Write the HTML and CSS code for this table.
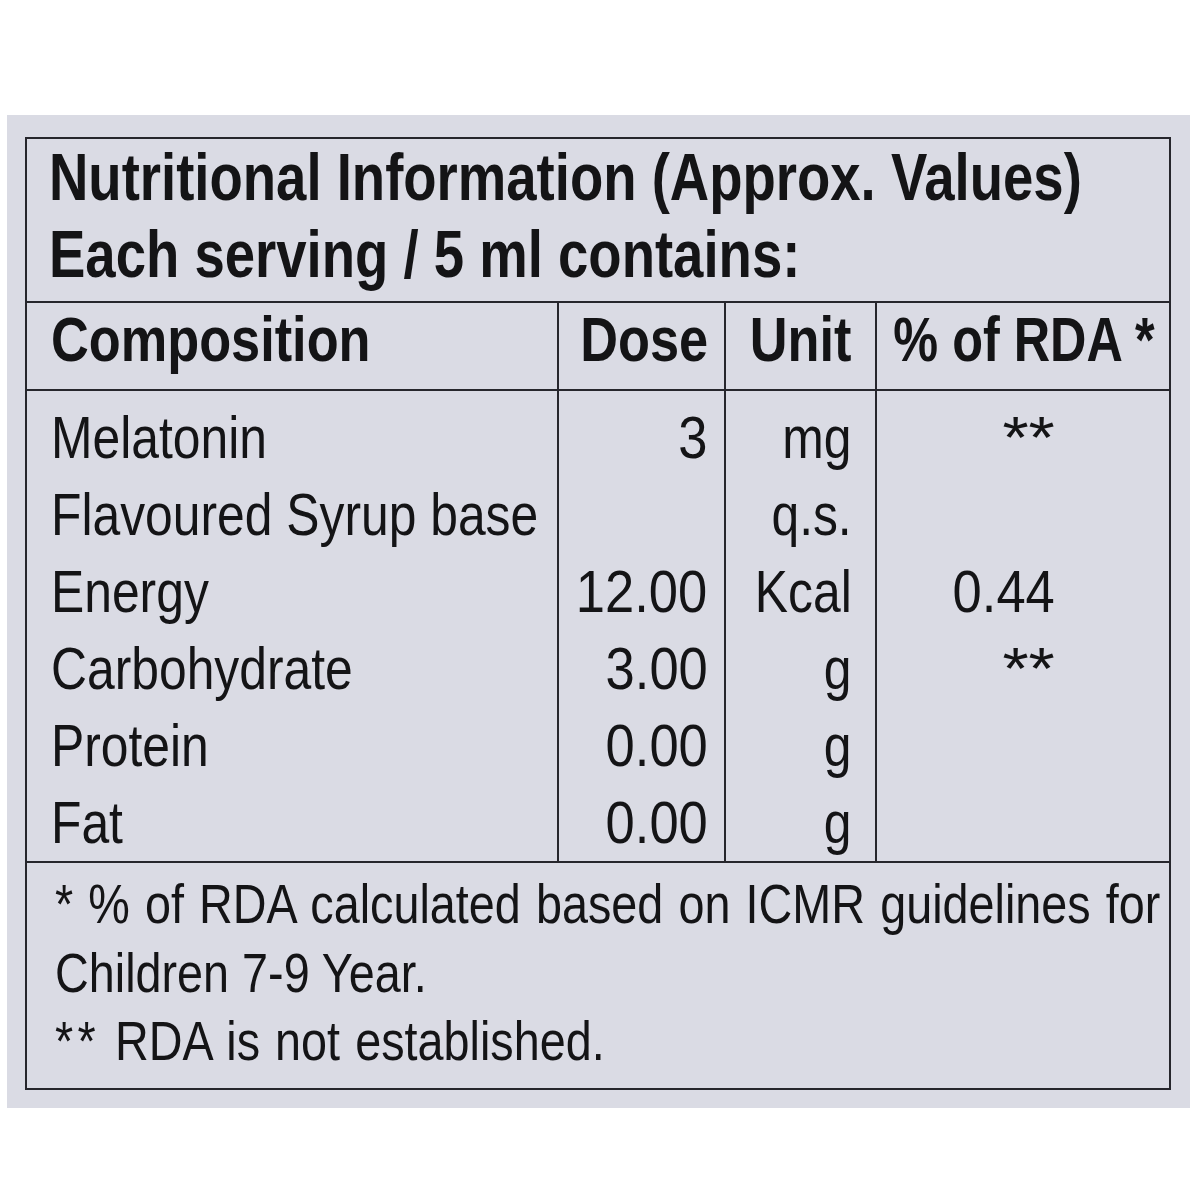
FILE: index.html
```html
<!DOCTYPE html>
<html>
<head>
<meta charset="utf-8">
<link rel="stylesheet" href="styles.css">
</head>
<body>
<div class="panel">
  <div class="label">
    <div class="title">
      <div class="tline"><span class="sq sq-l">Nutritional Information (Approx. Values)</span></div>
      <div class="tline"><span class="sq sq-l">Each serving / 5 ml contains:</span></div>
    </div>
    <table class="facts">
      <colgroup>
        <col class="c1"><col class="c2"><col class="c3"><col class="c4">
      </colgroup>
      <thead>
        <tr>
          <th class="comp"><span class="sq sq-l">Composition</span></th>
          <th class="dose"><span class="sq sq-r">Dose</span></th>
          <th class="unit"><span class="sq sq-r">Unit</span></th>
          <th class="h-rda"><span class="sq sq-r">% of RDA *</span></th>
        </tr>
      </thead>
      <tbody>
        <tr class="first">
          <td class="comp"><span class="sq sq-l">Melatonin</span></td>
          <td class="dose"><span class="sq sq-r num">3</span></td>
          <td class="unit"><span class="sq sq-r">mg</span></td>
          <td class="rda"><span class="sq sq-r stars">**</span></td>
        </tr>
        <tr>
          <td class="comp"><span class="sq sq-l">Flavoured Syrup base</span></td>
          <td class="dose"></td>
          <td class="unit"><span class="sq sq-r">q.s.</span></td>
          <td class="rda"></td>
        </tr>
        <tr>
          <td class="comp"><span class="sq sq-l">Energy</span></td>
          <td class="dose"><span class="sq sq-r num">12.00</span></td>
          <td class="unit"><span class="sq sq-r">Kcal</span></td>
          <td class="rda"><span class="sq sq-r num">0.44</span></td>
        </tr>
        <tr>
          <td class="comp"><span class="sq sq-l">Carbohydrate</span></td>
          <td class="dose"><span class="sq sq-r num">3.00</span></td>
          <td class="unit"><span class="sq sq-r">g</span></td>
          <td class="rda"><span class="sq sq-r stars">**</span></td>
        </tr>
        <tr>
          <td class="comp"><span class="sq sq-l">Protein</span></td>
          <td class="dose"><span class="sq sq-r num">0.00</span></td>
          <td class="unit"><span class="sq sq-r">g</span></td>
          <td class="rda"></td>
        </tr>
        <tr>
          <td class="comp"><span class="sq sq-l">Fat</span></td>
          <td class="dose"><span class="sq sq-r num">0.00</span></td>
          <td class="unit"><span class="sq sq-r">g</span></td>
          <td class="rda"></td>
        </tr>
      </tbody>
    </table>
    <div class="notes">
      <div class="nline"><span class="sq sq-l spaced">* % of RDA calculated based on ICMR guidelines for</span></div>
      <div class="nline"><span class="sq sq-l">Children 7-9 Year.</span></div>
      <div class="nline"><span class="sq sq-l spaced"><span class="nstar">**</span> RDA is not established.</span></div>
    </div>
  </div>
</div>
</body>
</html>
```
FILE: styles.css
```css
html, body {
  margin: 0;
  padding: 0;
  background: #ffffff;
}
body {
  width: 1200px;
  height: 1200px;
  overflow: hidden;
  font-family: "Liberation Sans", Arial, sans-serif;
  color: #141416;
}
.panel {
  margin: 115px 0 0 7px;
  width: 1183px;
  height: 993px;
  background: #dadbe4;
  padding: 22px 0 0 18px;
  box-sizing: border-box;
  overflow: hidden;
}
.label {
  width: 1146px;
  border: 2.5px solid #26262c;
  box-sizing: border-box;
  overflow: hidden;
}
.sq {
  display: inline-block;
  white-space: nowrap;
}
.sq-l { transform: scaleX(0.83); transform-origin: left center; }
.sq-r {
  transform: scaleX(0.83);
  transform-origin: right center;
  margin-left: -80px;
}
.num { transform: scaleX(0.875); }
.title {
  padding: 0 0 8px 22px;
  font-weight: bold;
  font-size: 66px;
  line-height: 77px;
  overflow: hidden;
}
.title .sq-l { transform: scaleX(0.826); }
.facts {
  width: 100%;
  border-collapse: collapse;
  table-layout: fixed;
}
.c1 { width: 531px; }
.c2 { width: 166px; }
.c3 { width: 151px; }
.c4 { width: 293px; }
.facts th {
  font-weight: bold;
  font-size: 63px;
  line-height: 72px;
  height: 86px;
  box-sizing: border-box;
  border-top: 2.5px solid #26262c;
  border-bottom: 2.5px solid #26262c;
  padding: 0 0 14px 0;
  vertical-align: top;
  overflow: hidden;
}
.facts th + th, .facts td + td {
  border-left: 2.5px solid #26262c;
}
.comp { text-align: left; padding-left: 24px !important; }
.dose { text-align: right; padding-right: 16px !important; }
.unit { text-align: right; padding-right: 23px !important; }
.h-rda { text-align: right; padding-right: 14px !important; }
.h-rda .sq-r { transform: scaleX(0.8); }
.rda { text-align: right; padding-right: 114px !important; }
.stars { transform: scaleX(1.12); }
.facts td {
  font-size: 60px;
  line-height: 77px;
  padding: 0;
  vertical-align: top;
}
.facts tr.first td { padding-top: 8px; }
.facts tbody { border-bottom: 2.5px solid #26262c; }
.notes {
  padding: 7px 0 12px 28px;
  font-size: 55px;
  line-height: 68.5px;
  overflow: hidden;
}
.notes .sq-l { transform: scaleX(0.85); }
.notes .spaced { word-spacing: 2.5px; }
.nstar { letter-spacing: 5px; }
```
